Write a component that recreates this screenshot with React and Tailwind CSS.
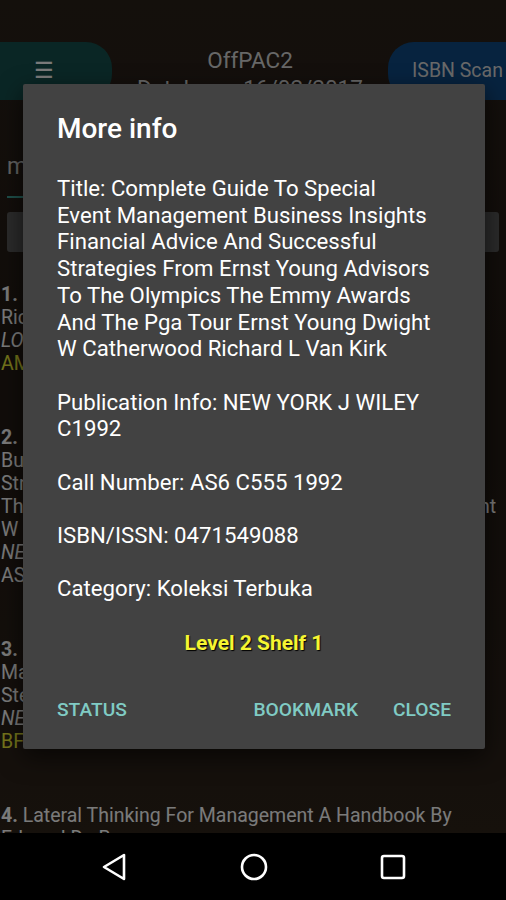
import React from 'react';

const books = [
  {
    n: '1.',
    head: 'Special Event Management In The 21st Century',
    lines: ['Richard L Van Kirk Dwight W Catherwood'],
    pub: 'LONDON WILEY 1997',
    call: 'AM7 C363 1997',
    avail: true,
  },
  {
    n: '2.',
    head: '',
    lines: [
      'Business Insights Financial Advice And Successful',
      'Strategies From Ernst Young Advisors To The Olympics',
      'The Emmy Awards And The Pga Tour Ernst Young Dwight',
      'W Catherwood Richard L Van Kirk',
    ],
    pub: 'NEW YORK J WILEY C1992',
    call: 'AS6 C555 1992',
    avail: false,
  },
  {
    n: '3.',
    head: '',
    lines: ['Management Of Special Events', 'Steven Wood Schmader Robert Jackson'],
    pub: 'NEW YORK WILEY 1994',
    call: 'BF637 S3 1994',
    avail: true,
  },
];

function NavBar() {
  return (
    <div className="h-[67px] bg-black flex items-center shrink-0">
      <svg className="ml-[100px]" width="28" height="30" viewBox="0 0 28 30">
        <path d="M24 3 L24 27 L4 15 Z" fill="none" stroke="white" strokeWidth="2.6" strokeLinejoin="round" />
      </svg>
      <svg className="ml-[111px]" width="30" height="30" viewBox="0 0 30 30">
        <circle cx="15" cy="15" r="12" fill="none" stroke="white" strokeWidth="2.6" />
      </svg>
      <svg className="ml-[110px]" width="28" height="28" viewBox="0 0 28 28">
        <rect x="3" y="3" width="22" height="22" rx="2" fill="none" stroke="white" strokeWidth="2.6" />
      </svg>
    </div>
  );
}

function BookItem({ book }) {
  return (
    <div className="mb-[51px] text-[19.5px] leading-[23px] text-white">
      <p className="whitespace-nowrap">
        <span className="font-bold">{book.n}</span> {book.head}
      </p>
      {book.lines.map((l) => (
        <p key={l} className="whitespace-nowrap">{l}</p>
      ))}
      <p className="italic">{book.pub}</p>
      <p className={book.avail ? 'text-[#f2f23a]' : 'text-white'}>{book.call}</p>
    </div>
  );
}

function MoreInfoDialog() {
  return (
    <div className="absolute left-[23px] top-[84px] w-[462px] h-[665px] bg-[#424242] rounded-[2px] shadow-[0_8px_24px_rgba(0,0,0,0.6)] flex flex-col px-[34px]">
      <h2 className="mt-[29px] text-[28px] leading-[32px] font-medium text-white">More info</h2>
      <div className="mt-[30px] text-[22.2px] leading-[26.7px] text-white flex flex-col gap-[26.7px] whitespace-nowrap">
        <p>
          Title: Complete Guide To Special<br />
          Event Management Business Insights<br />
          Financial Advice And Successful<br />
          Strategies From Ernst Young Advisors<br />
          To The Olympics The Emmy Awards<br />
          And The Pga Tour Ernst Young Dwight<br />
          W Catherwood Richard L Van Kirk
        </p>
        <p>
          Publication Info: NEW YORK J WILEY<br />
          C1992
        </p>
        <p>Call Number: AS6 C555 1992</p>
        <p>ISBN/ISSN: 0471549088</p>
        <p>Category: Koleksi Terbuka</p>
      </div>
      <p className="mt-[28px] text-center text-[21px] leading-[26px] font-bold text-[#f5f532] [text-shadow:1px_1px_1px_#000]">
        Level 2 Shelf 1
      </p>
      <div className="mt-[41px] flex items-center text-[19.2px] leading-[26px] font-medium text-[#80cbc4]">
        <span>STATUS</span>
        <span className="ml-auto">BOOKMARK</span>
        <span className="ml-[35px]">CLOSE</span>
      </div>
    </div>
  );
}

export default function App() {
  return (
    <div className="w-[506px] h-[900px] flex flex-col overflow-hidden font-['Roboto','Noto_Sans',sans-serif]">
      <div className="relative h-[833px] overflow-hidden bg-linear-to-b from-[#2b221a] via-[#241c15] to-[#2e241b]">
        <div className="h-[42px]" />
        <div className="flex items-center h-[58px]">
          <div className="w-[112px] h-full bg-[#16504e] rounded-r-[26px] flex items-center pl-[34px]">
            <span className="text-white text-[22px] leading-none">☰</span>
          </div>
          <div className="flex-1 flex flex-col items-center pt-[5px] text-[#d8d8d8] leading-[28px] whitespace-nowrap">
            <span className="text-[22.5px]">OffPAC2</span>
            <span className="text-[22.5px]">Database: 16/02/2017</span>
          </div>
          <div className="w-[118px] h-full bg-[#0f4a85] rounded-l-[26px] flex items-center pl-[24px]">
            <span className="text-[#dcdcdc] text-[19.5px] whitespace-nowrap">ISBN Scan</span>
          </div>
        </div>
        <div className="px-[7px] mt-[54px]">
          <p className="text-[23px] leading-[26px] text-[#cfcfcf]">management</p>
          <div className="mt-[16px] h-[2px] w-[440px] bg-[#3fa59c]" />
          <div className="mt-[14px] h-[40px] rounded-[3px] bg-[#5a5a5a]" />
        </div>
        <div className="mt-[31px] pl-[1px]">
          {books.map((b) => (
            <BookItem key={b.n} book={b} />
          ))}
          <p className="text-[19.5px] leading-[23px] text-white whitespace-nowrap">
            <span className="font-bold">4.</span> Lateral Thinking For Management A Handbook By
          </p>
          <p className="text-[19.5px] leading-[23px] text-white">Edward De Bono</p>
        </div>
        <div className="absolute inset-0 bg-black/[0.52]" />
        <MoreInfoDialog />
      </div>
      <NavBar />
    </div>
  );
}
